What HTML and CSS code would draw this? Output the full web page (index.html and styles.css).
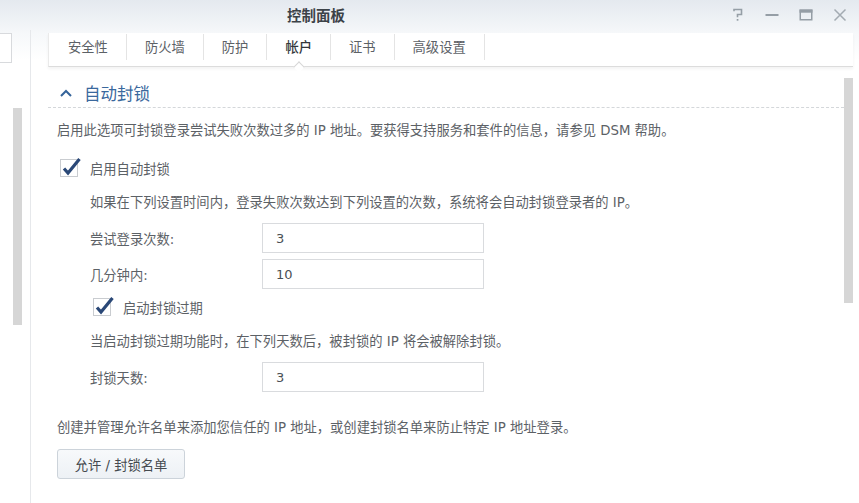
FILE: index.html
```html
<!DOCTYPE html>
<html lang="zh-CN">
<head>
  <meta charset="UTF-8">
  <title>控制面板</title>
  <link rel="stylesheet" href="styles.css">
</head>
<body>
  <div class="window">
    <!-- Title bar -->
    <div class="titlebar">
      <div class="title">控制面板</div>
      <div class="win-buttons">
        <span class="win-btn">
          <svg width="12" height="14" viewBox="0 0 12 14"><path d="M2 3.2V1.5h7.5v5H5.5v2.7" fill="none" stroke="#959ea6" stroke-width="1.6"/><rect x="4.7" y="11" width="1.7" height="1.7" fill="#959ea6"/></svg>
        </span>
        <span class="win-btn">
          <svg width="14" height="14" viewBox="0 0 14 14"><rect x="0.5" y="6" width="13" height="2" fill="#959ea6"/></svg>
        </span>
        <span class="win-btn">
          <svg width="14" height="14" viewBox="0 0 14 14"><rect x="1.25" y="2.25" width="11.5" height="9.5" fill="none" stroke="#959ea6" stroke-width="1.5"/><rect x="0.5" y="1.5" width="13" height="3.2" fill="#959ea6"/></svg>
        </span>
        <span class="win-btn">
          <svg width="14" height="14" viewBox="0 0 14 14"><path d="M1.5 1.5l11 11M12.5 1.5l-11 11" stroke="#a3abb2" stroke-width="1.5"/></svg>
        </span>
      </div>
    </div>

    <div class="main">
      <!-- Left list (cut off) -->
      <aside class="sidebar">
        <div class="search-box"></div>
        <div class="side-scroll"></div>
      </aside>

      <!-- Settings panel -->
      <section class="panel">
        <nav class="tabs">
          <span class="tab">安全性</span>
          <span class="tab">防火墙</span>
          <span class="tab">防护</span>
          <span class="tab active">帐户</span>
          <span class="tab">证书</span>
          <span class="tab">高级设置</span>
        </nav>

        <div class="panel-body">
          <div class="content">
            <div class="section-head">
              <svg class="caret" width="12" height="8" viewBox="0 0 12 8"><path d="M1 7l5-5 5 5" fill="none" stroke="#35649a" stroke-width="2"/></svg>
              <span>自动封锁</span>
            </div>

            <div class="section-body">
              <p class="desc first">启用此选项可封锁登录尝试失败次数过多的 IP 地址。要获得支持服务和套件的信息，请参见 DSM 帮助。</p>

              <label class="check-row check-main">
                <svg class="checkbox" width="18" height="18" viewBox="0 0 18 18"><rect x="0.5" y="0.5" width="17" height="17" fill="#fff" stroke="#c9ccd0"/><path d="M4 9.5l4 4.5L19.5 0" fill="none" stroke="#2a4877" stroke-width="3.2"/></svg>
                启用自动封锁
              </label>

              <div class="indent">
                <p class="desc gap-15">如果在下列设置时间内，登录失败次数达到下列设置的次数，系统将会自动封锁登录者的 IP。</p>

                <div class="field gap-10">
                  <span class="field-label">尝试登录次数:</span>
                  <input class="field-input" type="text" value="3">
                </div>
                <div class="field gap-6">
                  <span class="field-label">几分钟内:</span>
                  <input class="field-input" type="text" value="10">
                </div>

                <label class="check-row check-sub">
                  <svg class="checkbox" width="18" height="18" viewBox="0 0 18 18"><rect x="0.5" y="0.5" width="17" height="17" fill="#fff" stroke="#c9ccd0"/><path d="M4 9.5l4 4.5L19.5 0" fill="none" stroke="#2a4877" stroke-width="3.2"/></svg>
                  启动封锁过期
                </label>

                <p class="desc gap-15">当启动封锁过期功能时，在下列天数后，被封锁的 IP 将会被解除封锁。</p>

                <div class="field gap-10">
                  <span class="field-label">封锁天数:</span>
                  <input class="field-input" type="text" value="3">
                </div>
              </div>

              <p class="desc gap-26">创建并管理允许名单来添加您信任的 IP 地址，或创建封锁名单来防止特定 IP 地址登录。</p>

              <button class="list-button">允许 / 封锁名单</button>
            </div>
          </div>
          <div class="vscroll"></div>
        </div>
      </section>
    </div>
  </div>
</body>
</html>
```

FILE: styles.css
```css
/* General */
body {
  margin: 0;
  font-family: "DejaVu Sans", "Noto Sans CJK SC", sans-serif;
  font-size: 13.3px;
  color: #5c6166;
  background: #fff;
}

.window {
  width: 859px;
  height: 503px;
  overflow: hidden;
  background: linear-gradient(#e4e9ef 0, #f6f8fa 34px, #fff 60px);
}

/* Title bar */
.titlebar {
  display: flex;
  align-items: center;
  height: 30px;
  padding-right: 2px;
}

.title {
  flex: 1;
  padding-left: 287px;
  line-height: 28px;
  font-family: "Noto Sans CJK SC", sans-serif;
  font-size: 14.5px;
  font-weight: bold;
  color: #3c4248;
}

.win-buttons {
  display: flex;
}

.win-btn {
  width: 34px;
  height: 28px;
  display: flex;
  align-items: center;
  justify-content: center;
}

/* Main area */
.main {
  display: flex;
  height: 473px;
}

.sidebar {
  width: 30px;
  border-right: 1px solid #e6e8eb;
  padding-top: 3px;
}

.search-box {
  width: 11px;
  height: 28px;
  background: #fff;
  border: 1px solid #d8dadd;
  border-left: none;
}

.side-scroll {
  width: 9px;
  height: 217px;
  margin: 45px 0 0 13px;
  background: #d6d6d6;
}

.panel {
  flex: 1;
  padding: 3px 6px 0 17px;
}

/* Tabs */
.tabs {
  display: flex;
  align-items: flex-start;
  height: 33px;
  background: #fff;
  border-left: 1px solid #eaeaea;
  border-bottom: 1px solid #dcdcdc;
  box-shadow: 0 2px 3px rgba(0, 0, 0, 0.05);
  position: relative;
  z-index: 1;
}

.tab {
  position: relative;
  margin-top: 1px;
  height: 26px;
  line-height: 26px;
  padding: 0 18px;
  border-right: 1px solid #e4e4e4;
  font-family: "Noto Sans CJK SC", sans-serif;
  font-size: 13.3px;
  color: #5c6166;
}

.tab:first-child {
  padding-left: 19px;
}

.tab.active {
  color: #33373b;
  font-weight: 500;
}

.tab.active::after {
  content: "";
  position: absolute;
  left: 50%;
  bottom: -11px;
  width: 7px;
  height: 7px;
  margin-left: -4px;
  background: #fff;
  border-left: 1px solid #d6d6d6;
  border-top: 1px solid #d6d6d6;
  transform: rotate(45deg);
}

/* Panel body */
.panel-body {
  display: flex;
}

.content {
  flex: 1;
}

.vscroll {
  width: 9px;
  height: 225px;
  margin-top: 11px;
  background: #d6d6d6;
}

.section-head {
  display: flex;
  align-items: center;
  padding: 16px 0 4px 12px;
  line-height: 20px;
  border-bottom: 1px dashed #d4d7da;
  font-family: "Noto Sans CJK SC", sans-serif;
  font-size: 16.5px;
  color: #3a689d;
}

.caret {
  margin-right: 12px;
}

.section-body {
  padding-left: 9px;
}

.desc {
  margin: 0;
  line-height: 20px;
  white-space: nowrap;
}

.first {
  margin-top: 13px;
}

.gap-6 { margin-top: 6px; }
.gap-10 { margin-top: 10px; }
.gap-15 { margin-top: 15px; }
.gap-26 { margin-top: 26px; }

/* Checkboxes */
.check-row {
  display: flex;
  align-items: center;
  height: 20px;
}

.check-main {
  margin-top: 17px;
}

.check-sub {
  margin-top: 8px;
}

.checkbox {
  overflow: visible;
  margin: 0 12px 0 3px;
}

.indent {
  padding-left: 33px;
}

/* Form fields */
.field {
  display: flex;
  align-items: center;
}

.field-label {
  width: 172px;
}

.field-input {
  box-sizing: border-box;
  width: 222px;
  height: 30px;
  padding: 0 13px;
  border: 1px solid #d9dbde;
  border-radius: 0;
  font-family: inherit;
  font-size: 13px;
  color: #4a4f54;
  outline: none;
}

.list-button {
  display: block;
  margin-top: 11px;
  width: 128px;
  height: 30px;
  border: 1px solid #ccd3da;
  border-radius: 3px;
  background: linear-gradient(#f7f9fb, #edf1f5);
  font-family: inherit;
  font-size: 13.3px;
  color: #454a4f;
}
```
